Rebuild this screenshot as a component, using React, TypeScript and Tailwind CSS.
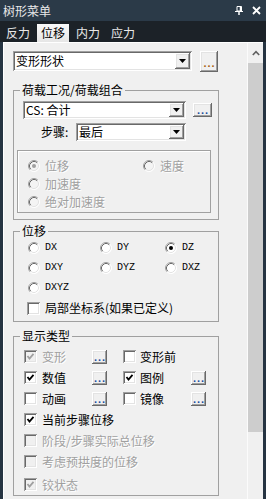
import React from "react";

const SUNKEN =
  "shadow-[inset_1px_1px_0_#a0a0a0,inset_-1px_-1px_0_#ffffff,inset_2px_2px_0_#696969,inset_-2px_-2px_0_#e3e3e3]";
const RAISED =
  "shadow-[inset_-1px_-1px_0_#696969,inset_1px_1px_0_#ffffff,inset_-2px_-2px_0_#a0a0a0,inset_2px_2px_0_#e3e3e3]";
const DIS = "text-[#a0a0a0] [text-shadow:1px_1px_0_#ffffff]";

function Arrow() {
  return (
    <span className={`h-full w-[15px] shrink-0 bg-[#f0f0f0] flex items-center justify-center ${RAISED}`}>
      <svg width="7" height="4" viewBox="0 0 7 4">
        <path d="M0 0 H7 L3.5 4 Z" fill="#000" />
      </svg>
    </span>
  );
}

function Combo({ text, className }: { text: string; className: string }) {
  return (
    <div className={`bg-white p-[2px] flex items-stretch ${SUNKEN} ${className}`}>
      <span className="flex-1 flex items-center pl-[1px] text-black">{text}</span>
      <Arrow />
    </div>
  );
}

function Dots({ className, color }: { className: string; color: string }) {
  return (
    <span className={`bg-[#f0f0f0] flex items-end justify-center shrink-0 ${RAISED} ${className}`}>
      <span
        className={`font-['Liberation_Sans',sans-serif] font-bold text-[11px] leading-[9px] tracking-[1px] pl-[1px] ${color}`}
      >
        ...
      </span>
    </span>
  );
}

function Radio({ checked, disabled }: { checked?: boolean; disabled?: boolean }) {
  return (
    <svg width="12" height="12" viewBox="0 0 12 12" className="shrink-0">
      <circle cx="6" cy="6" r="5.5" fill={disabled ? "#f4f4f4" : "#ffffff"} />
      <path d="M2.11 9.89 A5.5 5.5 0 0 1 9.89 2.11" fill="none" stroke="#a0a0a0" strokeWidth="1" />
      <path d="M9.89 2.11 A5.5 5.5 0 0 1 2.11 9.89" fill="none" stroke="#ffffff" strokeWidth="1" />
      <path d="M2.82 9.18 A4.5 4.5 0 0 1 9.18 2.82" fill="none" stroke="#696969" strokeWidth="1" />
      <path d="M9.18 2.82 A4.5 4.5 0 0 1 2.82 9.18" fill="none" stroke="#e3e3e3" strokeWidth="1" />
      {checked && <circle cx="6" cy="6" r="2" fill={disabled ? "#a0a0a0" : "#000000"} />}
    </svg>
  );
}

function Check({ checked, disabled }: { checked?: boolean; disabled?: boolean }) {
  return (
    <span
      className={`w-[13px] h-[13px] shrink-0 flex items-center justify-center ${
        disabled ? "bg-[#f0f0f0]" : "bg-white"
      } ${SUNKEN}`}
    >
      {checked && (
        <svg width="9" height="9" viewBox="0 0 9 9">
          <path
            d="M1.5 4 L3.5 6.5 L7.5 1.8"
            fill="none"
            stroke={disabled ? "#a0a0a0" : "#000000"}
            strokeWidth="1.8"
          />
        </svg>
      )}
    </span>
  );
}

function RadioItem({ label, checked, disabled, mono }: { label: string; checked?: boolean; disabled?: boolean; mono?: boolean }) {
  return (
    <div className="flex items-center gap-[5px]">
      <Radio checked={checked} disabled={disabled} />
      <span
        className={`${disabled ? DIS : "text-black"} ${
          mono ? "font-['Liberation_Mono',monospace] text-[10px]" : ""
        }`}
      >
        {label}
      </span>
    </div>
  );
}

function CheckItem({ label, checked, disabled, gap }: { label: string; checked?: boolean; disabled?: boolean; gap: string }) {
  return (
    <div className={`flex items-center ${gap}`}>
      <Check checked={checked} disabled={disabled} />
      <span className={disabled ? DIS : "text-black"}>{label}</span>
    </div>
  );
}

function Legend({ text }: { text: string }) {
  return <legend className="ml-[3px] px-[2px] leading-[14px] text-black">{text}</legend>;
}

export default function App() {
  return (
    <div className="w-[266px] h-[499px] overflow-hidden flex flex-col bg-[#263442] font-['Noto_Sans_CJK_SC',sans-serif] text-[12px] leading-none">
      {/* title bar */}
      <div className="h-[21px] shrink-0 bg-[#2b3a48] flex items-center pl-[3px] pr-[5px]">
        <span className="text-[#e8e8e8] text-[12px]">树形菜单</span>
        <div className="ml-auto flex items-center gap-[9px]">
          <svg width="8" height="9" viewBox="0 0 8 9">
            <path d="M2 0.5 H6.5 V5 H2 Z" fill="none" stroke="#fff" strokeWidth="1" />
            <path d="M5.5 0.5 V5" stroke="#fff" strokeWidth="1.5" />
            <path d="M0 5.5 H8" stroke="#fff" strokeWidth="1" />
            <path d="M4 5.5 V9" stroke="#fff" strokeWidth="1.5" />
          </svg>
          <svg width="9" height="9" viewBox="0 0 9 9">
            <path d="M1 1 L8 8 M8 1 L1 8" stroke="#fff" strokeWidth="1.8" />
          </svg>
        </div>
      </div>

      {/* tabs */}
      <div className="h-[21px] shrink-0 bg-[#1c2228] flex items-end pl-[2px] gap-[3px]">
        <span className="h-[18px] px-[4px] flex items-center text-[#e8e8e8]">反力</span>
        <span className="h-[18px] px-[4px] flex items-center text-black bg-gradient-to-b from-[#fafafa] to-[#e6e6e6]">位移</span>
        <span className="h-[18px] px-[4px] flex items-center text-[#e8e8e8]">内力</span>
        <span className="h-[18px] px-[4px] flex items-center text-[#e8e8e8]">应力</span>
      </div>

      {/* body */}
      <div className="flex-1 flex min-h-0">
        <div className="w-[3px] shrink-0 bg-[#263442]" />
        <div className="flex-1 flex border-t border-white min-h-0">
          <div className="w-[244px] shrink-0 border-l border-white bg-[#f0f0f0] pl-[9px] pt-[8px]">
            {/* top row */}
            <div className="flex items-start">
              <Combo text="变形形状" className="w-[179px] h-[20px]" />
              <Dots className="ml-[8px] w-[18px] h-[21px] pb-[4px]" color="text-[#a8600f]" />
            </div>

            {/* group 1 */}
            <fieldset className="mt-[11px] w-[206px] border border-[#a0a0a0] pl-[3px] pb-[6px]">
              <Legend text="荷载工况/荷载组合" />
              <div className="mt-[4px] ml-[6px] flex items-center">
                <Combo text="CS: 合计" className="w-[163px] h-[18px]" />
                <Dots className="ml-[7px] w-[19px] h-[14px] pb-[2px]" color="text-[#1c4f9c]" />
              </div>
              <div className="mt-[4px] flex items-center h-[18px]">
                <span className="ml-[24px] w-[35px] text-black">步骤:</span>
                <Combo text="最后" className="w-[110px] h-[18px]" />
              </div>
              <div className="mt-[9px] w-[194px] border border-[#a0a0a0] shadow-[inset_1px_1px_0_#ffffff] pl-[10px] pt-[6px] pb-[1px]">
                <div className="grid grid-cols-[115px_1fr] auto-rows-[18px] items-center">
                  <RadioItem label="位移" checked disabled />
                  <RadioItem label="速度" disabled />
                  <RadioItem label="加速度" disabled />
                  <span />
                  <RadioItem label="绝对加速度" disabled />
                </div>
              </div>
            </fieldset>

            {/* group 2 */}
            <fieldset className="mt-[4px] w-[206px] border border-[#a0a0a0] pl-[3px] pb-[3px]">
              <Legend text="位移" />
              <div className="pl-[11px] grid grid-cols-[72px_65px_1fr] auto-rows-[20px] items-center">
                <RadioItem label="DX" mono />
                <RadioItem label="DY" mono />
                <RadioItem label="DZ" checked mono />
                <RadioItem label="DXY" mono />
                <RadioItem label="DYZ" mono />
                <RadioItem label="DXZ" mono />
                <RadioItem label="DXYZ" mono />
              </div>
              <div className="pl-[10px] h-[20px] flex items-center">
                <CheckItem label="局部坐标系(如果已定义)" gap="gap-[5px]" />
              </div>
            </fieldset>

            {/* group 3 */}
            <fieldset className="mt-[7px] w-[206px] border border-[#a0a0a0] pl-[3px]">
              <Legend text="显示类型" />
              <div className="pt-[3px] pl-[7px]">
                <div className="grid grid-cols-[68px_15px_16px_68px_15px] auto-rows-[21px] items-center">
                  <CheckItem label="变形" checked disabled gap="gap-[5px]" />
                  <Dots className="w-[15px] h-[14px] pb-[2px]" color="text-[#1c4f9c]" />
                  <span />
                  <CheckItem label="变形前" gap="gap-[4px]" />
                  <span />
                  <CheckItem label="数值" checked gap="gap-[5px]" />
                  <Dots className="w-[15px] h-[14px] pb-[2px]" color="text-[#1c4f9c]" />
                  <span />
                  <CheckItem label="图例" checked gap="gap-[4px]" />
                  <Dots className="w-[15px] h-[14px] pb-[2px]" color="text-[#1c4f9c]" />
                  <CheckItem label="动画" gap="gap-[5px]" />
                  <Dots className="w-[15px] h-[14px] pb-[2px]" color="text-[#1c4f9c]" />
                  <span />
                  <CheckItem label="镜像" gap="gap-[4px]" />
                  <Dots className="w-[15px] h-[14px] pb-[2px]" color="text-[#1c4f9c]" />
                </div>
                <div className="h-[21px] flex items-center">
                  <CheckItem label="当前步骤位移" checked gap="gap-[5px]" />
                </div>
                <div className="h-[21px] flex items-center">
                  <CheckItem label="阶段/步骤实际总位移" disabled gap="gap-[5px]" />
                </div>
                <div className="h-[21px] flex items-center">
                  <CheckItem label="考虑预拱度的位移" disabled gap="gap-[5px]" />
                </div>
                <div className="mt-[2px] h-[21px] flex items-center">
                  <CheckItem label="铰状态" checked disabled gap="gap-[5px]" />
                </div>
              </div>
            </fieldset>
          </div>

          {/* scrollbar */}
          <div className="w-[16px] shrink-0 border-l border-[#fbfbfb] bg-[#f0f0f0] flex flex-col">
            <div className="h-[20px] flex items-center justify-center">
              <svg width="8" height="6" viewBox="0 0 8 6">
                <path d="M0.8 5 L4 1.6 L7.2 5" fill="none" stroke="#606060" strokeWidth="1.6" />
              </svg>
            </div>
            <div className="h-[369px] bg-[#cdcdcd]" />
          </div>
        </div>
        <div className="w-[3px] shrink-0 bg-[#263442]" />
      </div>
    </div>
  );
}
